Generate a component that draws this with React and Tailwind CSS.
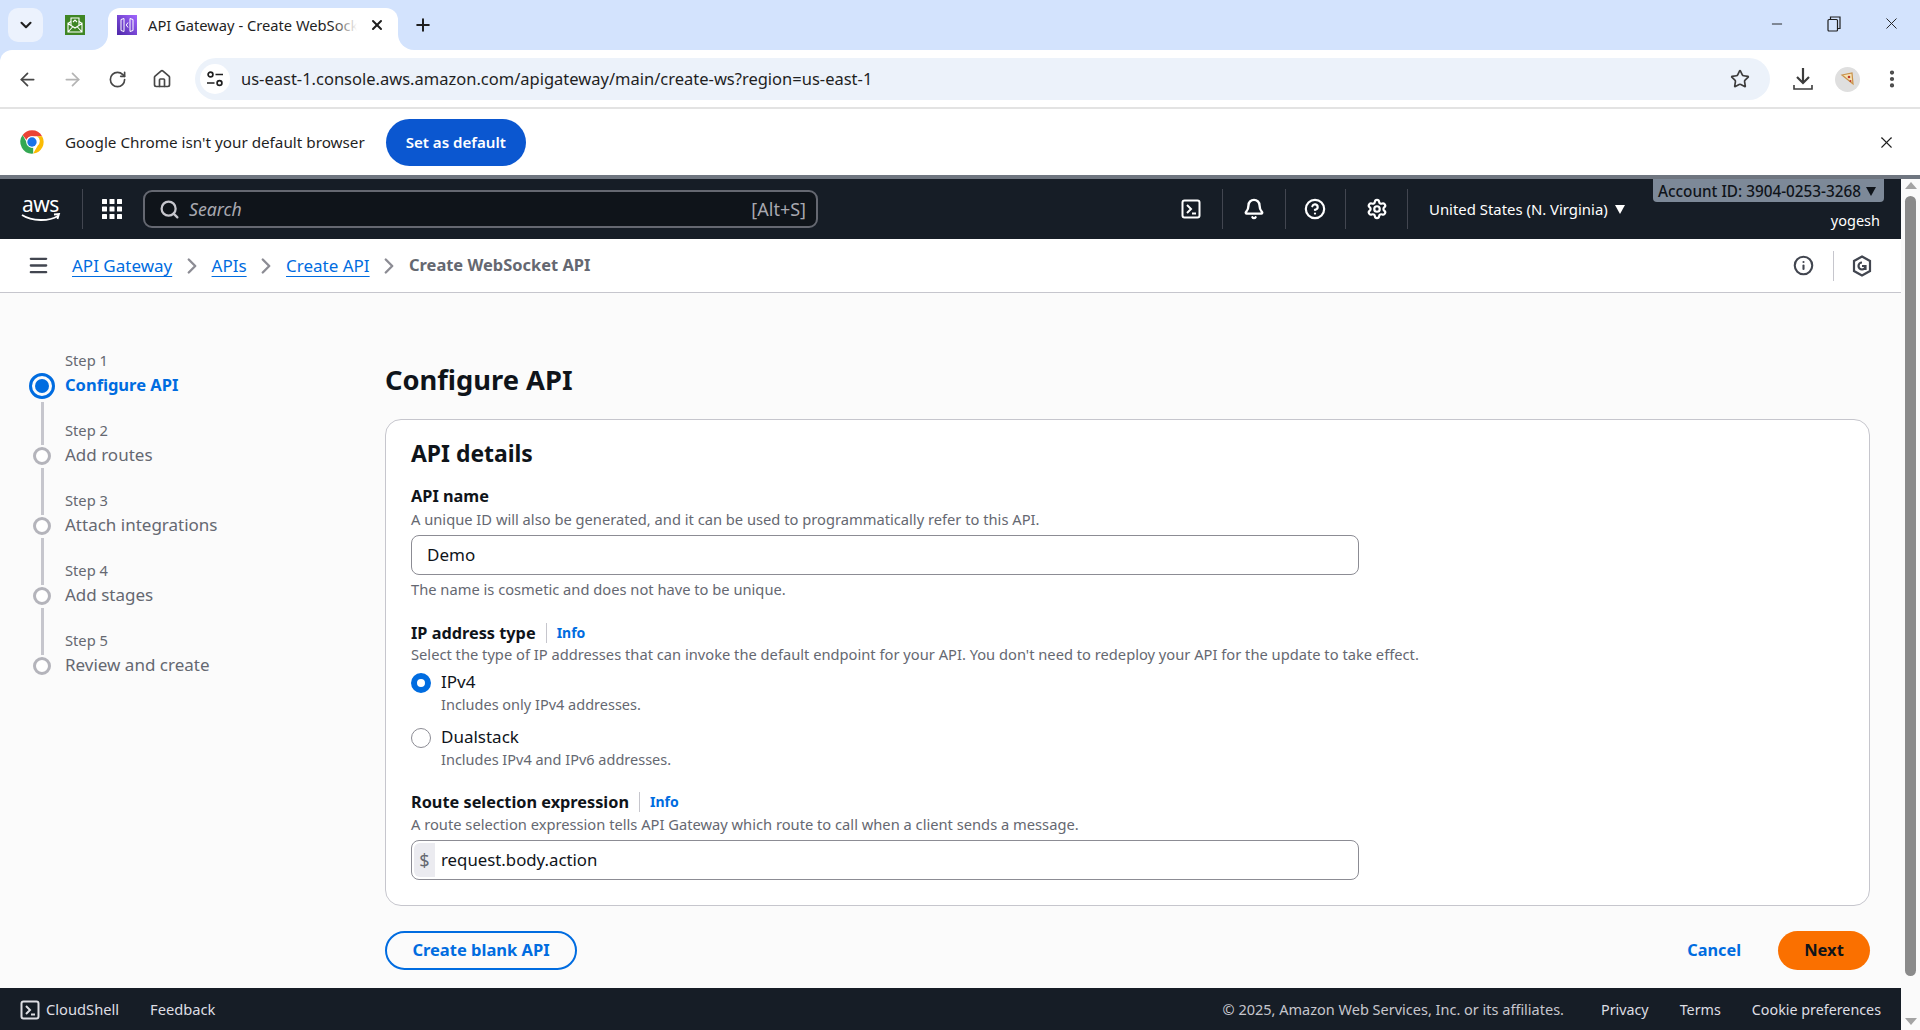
import React from 'react';
import {
  ArrowLeft,
  ArrowRight,
  Bell,
  ChevronDown,
  ChevronRight,
  CircleHelp,
  EllipsisVertical,
  House,
  Info,
  Menu,
  Minus,
  Plus,
  RotateCw,
  Search,
  Settings,
  Star,
  X,
} from 'lucide-react';

const STEPS = [
  { label: 'Step 1', title: 'Configure API', active: true },
  { label: 'Step 2', title: 'Add routes' },
  { label: 'Step 3', title: 'Attach integrations' },
  { label: 'Step 4', title: 'Add stages' },
  { label: 'Step 5', title: 'Review and create' },
];

const ChromeLogo = () => (
  <svg width="28" height="28" viewBox="0 0 48 48">
    <path d="M24 4a20 20 0 0 1 17.3 10H24a10 10 0 0 0-9.4 6.6L7.9 12.2A20 20 0 0 1 24 4z" fill="#ea4335" />
    <path d="M41.3 14A20 20 0 0 1 26 43.9l8-13.9a10 10 0 0 0-1.5-16z" fill="#fbbc04" />
    <path d="M26 43.9A20 20 0 0 1 7.9 12.2l8.4 14.6A10 10 0 0 0 26 33.8z" fill="#34a853" />
    <circle cx="24" cy="24" r="10" fill="#fff" />
    <circle cx="24" cy="24" r="8" fill="#1a73e8" />
  </svg>
);

const MailFavicon = () => (
  <svg width="20" height="20" viewBox="0 0 20 20">
    <rect width="20" height="20" fill="#3f8624" />
    <path d="M3 8.5 10 13l7-4.5V17H3z M3 8.5l3-2 M17 8.5l-3-2 M3 17l5-5.5 M17 17l-5-5.5" fill="none" stroke="#fff" strokeWidth="1.1" />
    <path d="M6 10V3h8v7 M8 7l2-2 2 2" fill="none" stroke="#fff" strokeWidth="1.1" />
  </svg>
);

const GatewayFavicon = () => (
  <svg width="20" height="20" viewBox="0 0 20 20">
    <defs>
      <linearGradient id="gw" x1="0" y1="1" x2="1" y2="0">
        <stop offset="0" stopColor="#4d27a8" />
        <stop offset="1" stopColor="#a166ff" />
      </linearGradient>
    </defs>
    <rect width="20" height="20" fill="url(#gw)" />
    <path d="M4 4.5 7 3.5v13l-3-1z M16 4.5l-3-1v13l3-1z M11 7.5 9.3 10l1.7 2.5" fill="none" stroke="#fff" strokeWidth="1" />
  </svg>
);

const RestoreIcon = () => (
  <svg width="14" height="16" viewBox="0 0 14 16" fill="none" stroke="#1f1f1f" strokeWidth="1.2">
    <rect x="1" y="3.5" width="9.5" height="11.5" rx="1" />
    <path d="M3.5 3.5V1h9.5v11.5h-2.5" />
  </svg>
);

const TuneIcon = () => (
  <svg width="18" height="18" viewBox="0 0 18 18" fill="none" stroke="#1f1f1f" strokeWidth="1.7">
    <circle cx="4.5" cy="4.5" r="2.4" />
    <path d="M9.5 4.5H17 M1 13h7.5" />
    <circle cx="13.5" cy="13" r="2.4" />
  </svg>
);

const DownloadIcon = () => (
  <svg width="20" height="24" viewBox="0 0 20 24" fill="none" stroke="#3c3c3c" strokeWidth="2.2">
    <path d="M10 1v14 M4 10l6 6 6-6" />
    <path d="M1 18v4h18v-4" strokeWidth="1.6" />
  </svg>
);

const AppsIcon = () => (
  <svg width="20" height="20" viewBox="0 0 20 20" fill="#fff">
    {[0, 7.5, 15].map((y) =>
      [0, 7.5, 15].map((x) => <rect key={`${x}-${y}`} x={x} y={y} width="5" height="5" rx="0.6" />)
    )}
  </svg>
);

const TerminalIcon = ({ size = 20 }) => (
  <svg width={size} height={size} viewBox="0 0 20 20" fill="none" stroke="currentColor" strokeWidth="2">
    <rect x="1.5" y="1.5" width="17" height="17" rx="2" />
    <path d="M6 6l4 4-4 4 M11 14.5h4" />
  </svg>
);

const HexIcon = () => (
  <svg width="20" height="22" viewBox="0 0 20 22" fill="none" stroke="#424650" strokeWidth="2.2">
    <path d="M10 1.5 18 6v10l-8 4.5L2 16V6z" />
    <path d="M13.5 11a3.5 3.5 0 1 1-3.5-3.5 M10 11h3.5v4" />
  </svg>
);

const PizzaAvatar = () => (
  <div className="w-[25px] h-[25px] rounded-full bg-[#dfdfdf] flex items-center justify-center">
    <svg width="15" height="17" viewBox="0 0 15 17">
      <path d="M2 4 12 2l1 11z" fill="#f6e3b4" stroke="#c9924a" strokeWidth="1.2" />
      <circle cx="9" cy="6" r="1.3" fill="#c0392b" />
      <circle cx="10.5" cy="10" r="1" fill="#c0392b" />
    </svg>
  </div>
);

const Caret = ({ className }) => (
  <svg width="10" height="9" viewBox="0 0 10 9" className={className}>
    <path d="M0 0h10L5 9z" fill="currentColor" />
  </svg>
);

const NavDivider = () => <div className="w-px h-[40px] bg-[#424650]" />;

const Crumb = ({ children }) => (
  <span className="text-[#006ce0] underline underline-offset-[4px] decoration-[1px]">{children}</span>
);

const CrumbSep = () => <ChevronRight size={26} strokeWidth={2.2} className="text-[#8c8c94] mx-[6.7px]" />;

const Heading = ({ children, info }) => (
  <div className="flex items-center h-[22px] text-[16.3px] leading-[22px] font-bold text-[#0f141a]">
    {children}
    {info && (
      <>
        <span className="w-px h-[20px] bg-[#c6c6cd] ml-[10px] mr-[10px]" />
        <span className="text-[14px] font-bold text-[#006ce0]">Info</span>
      </>
    )}
  </div>
);

const Hint = ({ children, className = '' }) => (
  <div className={`text-[14.7px] leading-[20px] text-[#656871] ${className}`}>{children}</div>
);

const Radio = ({ checked, label, hint, className = '' }) => (
  <div className={`flex gap-[10px] ${className}`}>
    <div
      className={
        checked
          ? 'w-[20px] h-[20px] mt-[2px] rounded-full bg-white border-[6px] border-[#006ce0]'
          : 'w-[20px] h-[20px] mt-[2px] rounded-full bg-white border border-[#8c8c94]'
      }
    />
    <div>
      <div className="text-[17px] leading-[22px] text-[#0f141a]">{label}</div>
      <div className="mt-px text-[14.5px] leading-[20px] text-[#656871]">{hint}</div>
    </div>
  </div>
);

const TabStrip = () => (
  <div className="h-[50px] bg-[#d3e3fd] flex items-end text-[#1f1f1f]">
    <div className="self-start mt-[8px] ml-[8px] w-[35px] h-[34px] rounded-[10px] bg-[#ecf2fd] flex items-center justify-center">
      <ChevronDown size={18} strokeWidth={2.8} />
    </div>
    <div className="self-start mt-[15px] ml-[22px]">
      <MailFavicon />
    </div>
    <div className="relative ml-[23px] w-[290px] h-[42px] bg-white rounded-t-[12px] flex items-start pt-[7px] pl-[9px]">
      <div className="absolute -left-[16px] bottom-0 w-[16px] h-[16px] bg-white">
        <div className="w-full h-full bg-[#d3e3fd] rounded-br-[16px]" />
      </div>
      <div className="absolute -right-[16px] bottom-0 w-[16px] h-[16px] bg-white">
        <div className="w-full h-full bg-[#d3e3fd] rounded-bl-[16px]" />
      </div>
      <GatewayFavicon />
      <div className="relative ml-[11px] w-[209px] overflow-hidden whitespace-nowrap text-[14.7px] leading-[20px]">
        API Gateway - Create WebSocket API
        <div className="absolute right-0 top-0 h-full w-[24px] bg-gradient-to-r from-transparent to-white" />
      </div>
      <X size={16} strokeWidth={3} className="ml-[12px] mt-[2px]" />
    </div>
    <Plus size={20} strokeWidth={2.4} className="self-start mt-[15px] ml-[15px]" />
    <div className="flex-1" />
    <div className="self-start mt-[14px] flex items-center">
      <Minus size={16} strokeWidth={1.4} />
      <div className="ml-[42px]">
        <RestoreIcon />
      </div>
      <X size={19} strokeWidth={1.2} className="ml-[41px] mr-[19px]" />
    </div>
  </div>
);

const Toolbar = () => (
  <div className="h-[59px] bg-white rounded-tl-[12px] flex items-center pt-px border-b-2 border-[#e3e3e3] text-[#474747]">
    <div className="flex items-center pl-[17px] w-[195px]">
      <ArrowLeft size={21} strokeWidth={2} />
      <ArrowRight size={21} strokeWidth={2} className="ml-[24px] text-[#b4b4b4]" />
      <RotateCw size={19} strokeWidth={2.1} className="ml-[25px]" />
      <House size={20} strokeWidth={2} className="ml-[25px]" />
    </div>
    <div className="w-[1575px] h-[42px] rounded-full bg-[#ecf2fa] flex items-center pl-[5px] pr-[20px]">
      <div className="w-[30px] h-[30px] rounded-full bg-white flex items-center justify-center">
        <TuneIcon />
      </div>
      <div className="ml-[11px] flex-1 text-[16.5px] text-[#1f1f1f] whitespace-nowrap">
        us-east-1.console.aws.amazon.com/apigateway/main/create-ws?region=us-east-1
      </div>
      <Star size={20} strokeWidth={2} className="text-[#3c3c3c]" />
    </div>
    <div className="ml-[23px]">
      <DownloadIcon />
    </div>
    <div className="ml-[22px]">
      <PizzaAvatar />
    </div>
    <EllipsisVertical size={22} strokeWidth={2.6} className="ml-[21px]" />
  </div>
);

const Infobar = () => (
  <div className="h-[66px] bg-white flex items-center pl-[18px] pr-[24px] text-[#1f1f1f]">
    <ChromeLogo />
    <span className="ml-[19px] text-[15.25px]">Google Chrome isn't your default browser</span>
    <button className="ml-[21px] w-[140px] h-[47px] rounded-full bg-[#0b57d0] text-white text-[15.1px] font-semibold">
      Set as default
    </button>
    <div className="flex-1" />
    <X size={19} strokeWidth={1.4} />
  </div>
);

const TopNav = () => (
  <div className="relative h-[60px] bg-[#161d26] flex items-center text-white">
    <div className="w-[82px] pl-[21px] flex flex-col items-center pr-[22px]">
      <span className="text-[21px] leading-[18px] font-normal tracking-[-0.5px]">aws</span>
      <svg width="40" height="10" viewBox="0 0 40 10" fill="none" stroke="#fff" strokeWidth="1.8">
        <path d="M1 2c10 6.5 27 6.5 36 1 M33 1.5l5-.5-1.5 5" />
      </svg>
    </div>
    <NavDivider />
    <div className="ml-[19px]">
      <AppsIcon />
    </div>
    <div className="ml-[21px] w-[675px] h-[38px] rounded-[9px] border-2 border-[#656871] bg-[#0f141a] flex items-center pl-[14px] pr-[10px] text-[#c6c6cd]">
      <Search size={21} strokeWidth={2.6} />
      <span className="ml-[9px] text-[17.7px] italic text-[#a8a8b0]">Search</span>
      <div className="flex-1" />
      <span className="text-[18px] text-[#a8a8b0]">[Alt+S]</span>
    </div>
    <div className="ml-[363px] w-[20px] flex justify-center">
      <TerminalIcon />
    </div>
    <div className="ml-[21px]">
      <NavDivider />
    </div>
    <Bell size={22} strokeWidth={2.6} className="ml-[20px]" />
    <div className="ml-[20px]">
      <NavDivider />
    </div>
    <CircleHelp size={22} strokeWidth={2.4} className="ml-[18px]" />
    <div className="ml-[19px]">
      <NavDivider />
    </div>
    <Settings size={22} strokeWidth={2.4} className="ml-[20px]" />
    <div className="ml-[19px]">
      <NavDivider />
    </div>
    <span className="ml-[21px] text-[14.9px] whitespace-nowrap">United States (N. Virginia)</span>
    <Caret className="ml-[7px] text-white" />
    <div className="absolute right-[17px] top-0 w-[231px] h-[23px] pt-[2px] rounded-b-[4px] bg-[#7d8998] flex items-center pl-[5px] text-[15.3px] font-medium text-[#0f141a] whitespace-nowrap">
      Account ID: 3904-0253-3268
      <Caret className="ml-[5px] text-[#0f141a]" />
    </div>
    <span className="absolute right-[21px] top-[30px] text-[14.5px] leading-[22px]">yogesh</span>
  </div>
);

const Breadcrumbs = () => (
  <div className="h-[54px] flex items-center bg-white border-b border-[#c6c6cd] text-[17px] pl-[27px] pr-[29px]">
    <Menu size={23} strokeWidth={2.4} className="text-[#424650]" />
    <div className="ml-[22px] flex items-center">
      <Crumb>API Gateway</Crumb>
      <CrumbSep />
      <Crumb>APIs</Crumb>
      <CrumbSep />
      <Crumb>Create API</Crumb>
      <CrumbSep />
      <span className="font-bold text-[16.45px] text-[#656871]">Create WebSocket API</span>
    </div>
    <div className="flex-1" />
    <Info size={21} strokeWidth={2.4} className="text-[#424650]" />
    <div className="w-px h-[30px] bg-[#c6c6cd] ml-[19px] mr-[18px]" />
    <HexIcon />
  </div>
);

const Stepper = () => (
  <aside className="w-[385px] shrink-0 pt-[55px] pl-[29px] flex">
    <div className="w-[26px] pt-[25px] flex flex-col items-center">
      <div className="w-[26px] h-[26px] rounded-full border-[3px] border-[#006ce0] flex items-center justify-center">
        <div className="w-[14px] h-[14px] rounded-full bg-[#006ce0]" />
      </div>
      <div className="w-[3px] h-[43px] mt-[3px] mb-[2px] bg-[#c6c6cd]" />
      {STEPS.slice(1).map((step, i) => (
        <React.Fragment key={step.label}>
          <div className="w-[18px] h-[18px] rounded-full border-[3px] border-[#b4b4bb] bg-white" />
          {i < 3 && <div className="w-[3px] h-[47px] mt-[3px] mb-[2px] bg-[#c6c6cd]" />}
        </React.Fragment>
      ))}
    </div>
    <div className="ml-[10px]">
      {STEPS.map((step) => (
        <div key={step.label} className="h-[70px]">
          <div className="text-[14.7px] leading-[24px] text-[#656871]">{step.label}</div>
          <div
            className={
              step.active
                ? 'text-[16.5px] leading-[24px] mt-px font-bold text-[#006ce0]'
                : 'text-[17px] leading-[24px] mt-px text-[#656871]'
            }
          >
            {step.title}
          </div>
        </div>
      ))}
    </div>
  </aside>
);

const ApiCard = () => (
  <section className="mt-[21px] bg-white border border-[#c6c6cd] rounded-[16px] pt-[18px] px-[25px] pb-[25px]">
    <h2 className="text-[22.9px] leading-[32px] font-bold text-[#0f141a]">API details</h2>
    <div className="mt-[15px]">
      <Heading>API name</Heading>
    </div>
    <Hint className="mt-[2px]">A unique ID will also be generated, and it can be used to programmatically refer to this API.</Hint>
    <div className="mt-[6px] w-[948px] h-[40px] rounded-[8px] border border-[#8c8c94] bg-white flex items-center pl-[15px] text-[17px] text-[#0f141a]">
      Demo
    </div>
    <Hint className="mt-[4px]">The name is cosmetic and does not have to be unique.</Hint>
    <div className="mt-[23px]">
      <Heading info>IP address type</Heading>
    </div>
    <Hint>
      Select the type of IP addresses that can invoke the default endpoint for your API. You don't need to redeploy your API for the update to take effect.
    </Hint>
    <Radio className="mt-[7px]" checked label="IPv4" hint="Includes only IPv4 addresses." />
    <Radio className="mt-[12px]" label="Dualstack" hint="Includes IPv4 and IPv6 addresses." />
    <div className="mt-[22px]">
      <Heading info>Route selection expression</Heading>
    </div>
    <Hint className="mt-px">A route selection expression tells API Gateway which route to call when a client sends a message.</Hint>
    <div className="mt-[6px] w-[948px] h-[40px] rounded-[8px] border border-[#8c8c94] bg-white flex items-center pl-[2px] text-[16.8px] text-[#0f141a]">
      <div className="w-[21px] h-[34px] bg-[#ebebf0] flex items-center justify-center text-[18px] text-[#656871] rounded-l-[6px]">$</div>
      <span className="ml-[6px]">request.body.action</span>
    </div>
  </section>
);

const Footer = () => (
  <footer className="h-[42px] bg-[#161d26] flex items-center pt-px pl-[20px] pr-[20px] text-[14.3px] text-[#dedee3]">
    <TerminalIcon />
    <span className="ml-[6px] text-[14.7px]">CloudShell</span>
    <span className="ml-[31px] text-[14.7px]">Feedback</span>
    <div className="flex-1" />
    <span className="text-[14.5px] text-[#c6c6cd]">© 2025, Amazon Web Services, Inc. or its affiliates.</span>
    <span className="ml-[37px]">Privacy</span>
    <span className="ml-[31px]">Terms</span>
    <span className="ml-[31px]">Cookie preferences</span>
  </footer>
);

const Scrollbar = () => (
  <div className="w-[19px] shrink-0 bg-[#fafafa] flex flex-col items-center pt-[3px] pb-[5px]">
    <div className="w-0 h-0 border-x-[6px] border-x-transparent border-b-[7px] border-b-[#a3a3a3]" />
    <div className="mt-[7px] w-[11px] h-[780px] rounded-full bg-[#8a8a8a]" />
    <div className="flex-1" />
    <div className="w-0 h-0 border-x-[6px] border-x-transparent border-t-[7px] border-t-[#a3a3a3]" />
  </div>
);

export default function App() {
  return (
    <div className="h-screen overflow-hidden flex flex-col font-['Noto_Sans',sans-serif] bg-white">
      <div className="bg-[#d3e3fd]">
        <TabStrip />
        <Toolbar />
      </div>
      <Infobar />
      <div className="h-[4px] bg-[#6f7680]" />
      <div className="flex-1 flex min-h-0">
        <div className="flex-1 flex flex-col min-w-0">
          <TopNav />
          <Breadcrumbs />
          <div className="flex-1 flex bg-[#fbfbfb] min-h-0">
            <Stepper />
            <main className="flex-1 pr-[31px] pt-[69px]">
              <h1 className="text-[27.3px] leading-[36px] font-bold text-[#0f141a]">Configure API</h1>
              <ApiCard />
              <div className="mt-[25px] flex items-center">
                <button className="w-[192px] h-[39px] rounded-full border-2 border-[#006ce0] text-[16.5px] font-bold text-[#006ce0]">
                  Create blank API
                </button>
                <div className="flex-1" />
                <span className="text-[16.3px] font-bold text-[#006ce0]">Cancel</span>
                <button className="ml-[37px] w-[92px] h-[39px] rounded-full bg-[#fa7000] text-[16.5px] font-bold text-[#0f141a]">
                  Next
                </button>
              </div>
            </main>
          </div>
          <Footer />
        </div>
        <Scrollbar />
      </div>
    </div>
  );
}
